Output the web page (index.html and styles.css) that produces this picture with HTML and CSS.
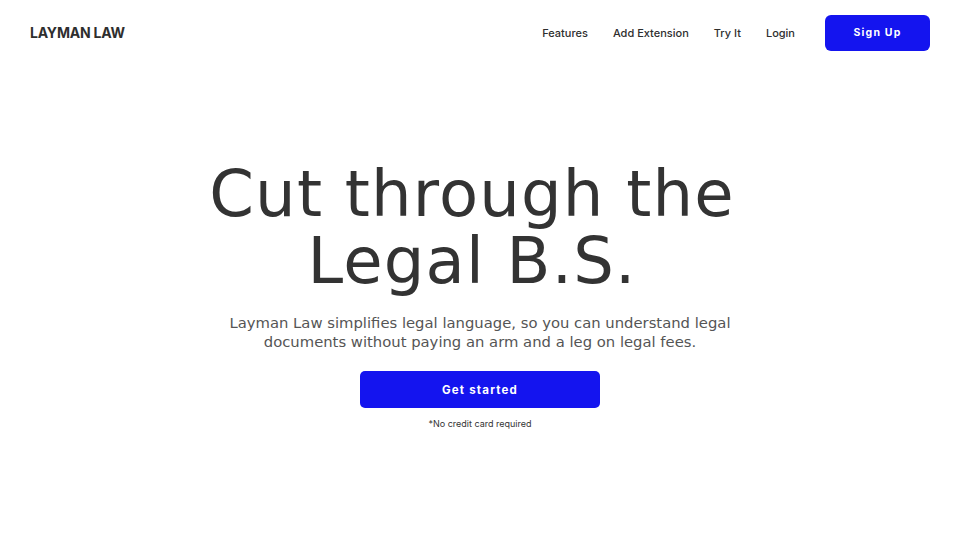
FILE: index.html
```html
<!DOCTYPE html>
<html lang="en">
<head>
<meta charset="utf-8">
<title>Layman Law</title>
<link rel="stylesheet" href="styles.css">
</head>
<body>
<header class="topbar">
  <div class="logo">LAYMAN LAW</div>
  <nav class="nav">
    <a class="nav-link" href="#">Features</a>
    <a class="nav-link" href="#">Add Extension</a>
    <a class="nav-link" href="#">Try It</a>
    <a class="nav-link" href="#">Login</a>
    <a class="btn btn-signup" href="#">Sign Up</a>
  </nav>
</header>
<main class="hero">
  <h1 class="headline">Cut through the<br>Legal B.S.</h1>
  <p class="lead">Layman Law simplifies legal language, so you can understand legal<br>documents without paying an arm and a leg on legal fees.</p>
  <a class="btn btn-cta" href="#">Get started</a>
  <p class="note">*No credit card required</p>
</main>
</body>
</html>
```

FILE: styles.css
```css
* { box-sizing: border-box; }
html, body { margin: 0; padding: 0; background: #fff; }
body {
  font-family: Inter, "Liberation Sans", sans-serif;
  color: #333;
  width: 960px;
  height: 540px;
  overflow: hidden;
}
a { text-decoration: none; color: inherit; }
.topbar {
  display: flex;
  align-items: center;
  justify-content: space-between;
  padding: 15px 30px 0 30px;
  height: 50px;
}
.logo {
  font-weight: 700;
  font-size: 14px;
  letter-spacing: -0.2px;
  color: #2e2e2e;
}
.nav {
  display: flex;
  align-items: center;
}
.nav-link {
  font-size: 11px;
  font-weight: 500;
  color: #2e2e2e;
  margin-right: 25px;
}
.nav-link:first-child { margin-left: 2px; }
.nav-link:nth-child(2) { margin-right: 25px; }
.nav-link:nth-child(4) { margin-right: 30px; }
.btn {
  display: inline-flex;
  align-items: center;
  justify-content: center;
  background: #1414ef;
  color: #fff;
  font-weight: 700;
  letter-spacing: 1.2px;
}
.btn-signup {
  width: 105px;
  height: 36px;
  border-radius: 6px;
  font-size: 10.5px;
}
.hero {
  display: flex;
  flex-direction: column;
  align-items: center;
  text-align: center;
  padding-top: 111px;
}
.headline {
  margin: 0;
  padding-right: 16px;
  font-family: "DejaVu Sans", sans-serif;
  font-weight: 400;
  font-size: 64px;
  line-height: 67px;
  letter-spacing: 1.2px;
  color: #333;
}
.lead {
  margin: 18px 0 0 0;
  font-family: "DejaVu Sans", sans-serif;
  font-size: 14.8px;
  line-height: 19px;
  color: #555;
}
.btn-cta {
  margin-top: 20px;
  width: 240px;
  height: 37px;
  border-radius: 5px;
  font-size: 11.5px;
}
.note {
  margin: 10px 0 0 0;
  font-size: 9px;
  color: #333;
}
```
